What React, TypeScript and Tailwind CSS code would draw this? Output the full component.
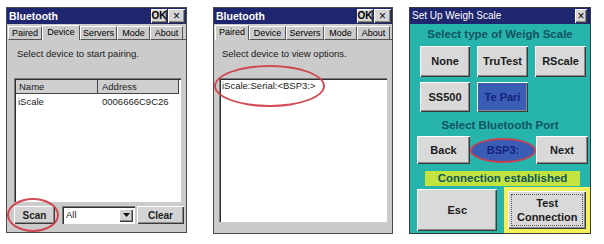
import React from 'react';

const font = "font-['Liberation_Sans',Arial,sans-serif]";
const raised = "shadow-[inset_1px_1px_0_#ffffff,inset_-1px_-1px_0_#3a3a3a,inset_-2px_-2px_0_#8a8a8a]";
const sunken = "shadow-[inset_1px_1px_0_#7a7a7a,inset_2px_2px_0_#2f2f2f,inset_-1px_-1px_0_#ffffff]";

type Tab = { name: string; w: string };

const tabs1: Tab[] = [
    { name: 'Paired', w: 'w-[34px]' },
    { name: 'Device', w: 'w-[38px]' },
    { name: 'Servers', w: 'w-[37px]' },
    { name: 'Mode', w: 'w-[33px]' },
    { name: 'About', w: 'w-[33px]' },
];

const tabs2: Tab[] = [
    { name: 'Paired', w: 'w-[34px]' },
    { name: 'Device', w: 'w-[37px]' },
    { name: 'Servers', w: 'w-[38px]' },
    { name: 'Mode', w: 'w-[33px]' },
    { name: 'About', w: 'w-[33px]' },
];

function TitleBar({ title }: { title: string }) {
    return (
        <div className="h-[16px] bg-[#1f2670] flex items-center justify-between pl-[2px] pr-[1px]">
            <span className="text-white font-bold text-[10.5px] leading-none">{title}</span>
            <div className="flex gap-[1px]">
                <div className={`w-[16px] h-[14px] bg-[#d6d6d6] ${raised} flex items-center justify-center text-[10px] font-bold text-black leading-none`}>OK</div>
                <div className={`w-[17px] h-[14px] bg-[#d6d6d6] ${raised} flex items-center justify-center text-[12px] text-black leading-none`}>×</div>
            </div>
        </div>
    );
}

function TabStrip({ items, active }: { items: Tab[]; active: string }) {
    return (
        <div className="mt-[1px] h-[15px] flex items-end pl-[1px]">
            {items.map((t) => (
                <div
                    key={t.name}
                    className={
                        t.name === active
                            ? `${t.w} h-[15px] border-t border-l border-r border-t-white border-l-white border-r-[#555] text-[9px] leading-[13px] text-center text-black`
                            : `${t.w} h-[14px] border border-t-white border-l-white border-r-[#555] border-b-[#555] text-[9px] leading-[12px] text-center text-black`
                    }
                >
                    {t.name}
                </div>
            ))}
            <div className="flex-1 h-[1px] bg-[#555]" />
        </div>
    );
}

function DevicePanel() {
    return (
        <div className="w-[181px] h-[226px] bg-[#cbcbcb] border border-[#4a4a4a] flex flex-col">
            <TitleBar title="Bluetooth" />
            <TabStrip items={tabs1} active="Device" />
            <div className="mt-[8px] pl-[10px] text-[9.5px] leading-[12px] text-[#1a1a1a]">Select device to start pairing.</div>
            <div className={`mt-[18px] ml-[7px] mr-[5px] h-[124px] bg-white ${sunken} p-[2px] flex flex-col`}>
                <div className="flex h-[14px] text-[9.5px] leading-[13px] text-[#222]">
                    <div className="w-[82px] bg-[#cfcfcf] border-r border-b border-[#444] pl-[3px]">Name</div>
                    <div className="flex-1 bg-[#cfcfcf] border-r border-b border-[#444] pl-[4px]">Address</div>
                </div>
                <div className="flex text-[9.5px] leading-[13px] text-[#222] mt-[1px]">
                    <div className="w-[82px] pl-[2px]">iScale</div>
                    <div className="flex-1 pl-[4px]">0006666C9C26</div>
                </div>
            </div>
            <div className="mt-[4px] ml-[7px] mr-[2px] h-[18px] flex relative">
                <div className={`w-[41px] bg-[#d3d3d3] ${raised} text-[10px] font-bold text-[#222] flex items-center justify-center`}>Scan</div>
                <div className={`ml-[7px] w-[73px] bg-white ${sunken} flex items-center justify-between pl-[4px] pr-[2px]`}>
                    <span className="text-[9.5px] text-[#222]">All</span>
                    <div className={`w-[14px] h-[13px] bg-[#d3d3d3] ${raised} flex items-center justify-center`}>
                        <svg width="7" height="4" viewBox="0 0 7 4"><path d="M0 0h7L3.5 4z" fill="#111" /></svg>
                    </div>
                </div>
                <div className={`ml-[2px] flex-1 bg-[#d3d3d3] ${raised} text-[10px] font-bold text-[#222] flex items-center justify-center`}>Clear</div>
                <div className="absolute left-[-7px] top-[-8px] w-[52px] h-[34px] rounded-[50%] border-[2.5px] border-[#cf3a44] opacity-90" />
            </div>
        </div>
    );
}

function PairedPanel() {
    return (
        <div className="ml-[26px] w-[180px] h-[227px] bg-[#cbcbcb] border border-[#4a4a4a] flex flex-col">
            <TitleBar title="Bluetooth" />
            <TabStrip items={tabs2} active="Paired" />
            <div className="mt-[8px] pl-[8px] text-[9.5px] leading-[12px] text-[#1a1a1a]">Select device to view options.</div>
            <div className={`mt-[18px] ml-[5px] mr-[5px] h-[144px] bg-white ${sunken} relative`}>
                <div className="pl-[3px] pt-[1px] text-[9.5px] leading-[13px] text-[#222]">iScale:Serial:&lt;BSP3:&gt;</div>
                <div className="absolute left-[-5px] top-[-13px] w-[111px] h-[42px] rounded-[50%] border-[2.5px] border-[#cf3a44] opacity-90" />
            </div>
        </div>
    );
}

const scaleBtn = `bg-[#d9d9d9] ${raised} flex items-center justify-center text-[11px] font-bold text-[#1b1b1b]`;

function ScalePanel() {
    return (
        <div className="ml-[16px] w-[182px] h-[227px] bg-[#27b4ad] border border-[#3a3a3a] flex flex-col">
            <div className="h-[16px] bg-[#1f2670] flex items-center justify-between pl-[2px] pr-[3px]">
                <span className="text-white text-[10px] leading-none">Set Up Weigh Scale</span>
                <div className={`w-[12px] h-[14px] bg-[#d6d6d6] ${raised} flex items-center justify-center text-[12px] text-black leading-none`}>×</div>
            </div>
            <div className="mt-[4px] h-[13px] text-center text-[11.5px] leading-[13px] font-bold text-[#115560]">Select type of Weigh Scale</div>
            <div className="mt-[5px] pl-[10px] flex gap-[7px] h-[31px]">
                <div className={`w-[50px] ${scaleBtn}`}>None</div>
                <div className={`w-[51px] ${scaleBtn}`}>TruTest</div>
                <div className={`w-[51px] ${scaleBtn}`}>RScale</div>
            </div>
            <div className="mt-[5px] pl-[10px] flex gap-[7px] h-[30px]">
                <div className={`w-[50px] ${scaleBtn}`}>SS500</div>
                <div className={`w-[51px] bg-[#3b5cb4] ${raised} flex items-center justify-center text-[11px] font-bold text-[#14237a]`}>Te Pari</div>
            </div>
            <div className="mt-[7px] h-[13px] text-center text-[11.5px] leading-[13px] font-bold text-[#115560]">Select Bluetooth Port</div>
            <div className="mt-[4px] pl-[7px] flex items-center h-[28px]">
                <div className={`w-[53px] h-[28px] ${scaleBtn}`}>Back</div>
                <div className="w-[66px] h-[25px] rounded-[50%] bg-[#3b5cb4] border-[2.5px] border-[#c9404e] flex items-center justify-center text-[11px] font-bold text-[#14237a]">BSP3:</div>
                <div className={`w-[52px] h-[28px] ${scaleBtn}`}>Next</div>
            </div>
            <div className="mt-[7px] ml-[15px] w-[155px] h-[15px] bg-[#c3e43c] text-center text-[11.5px] leading-[15px] font-bold text-[#115560]">Connection established</div>
            <div className="mt-[3px] pl-[7px] flex h-[42px]">
                <div className={`w-[81px] ${scaleBtn}`}>Esc</div>
                <div className="ml-[7px] -mt-[2px] w-[86px] h-[46px] bg-[#f2f05a] p-[4px]">
                    <div className={`w-full h-full ${scaleBtn} p-[3px]`}>
                        <div className="w-full h-full border border-dotted border-[#555] flex items-center justify-center text-center leading-[14px]">Test<br />Connection</div>
                    </div>
                </div>
            </div>
        </div>
    );
}

export default function App() {
    return (
        <div className={`w-[604px] h-[244px] bg-white flex items-start pt-[7px] pl-[6px] ${font}`}>
            <DevicePanel />
            <PairedPanel />
            <ScalePanel />
        </div>
    );
}
